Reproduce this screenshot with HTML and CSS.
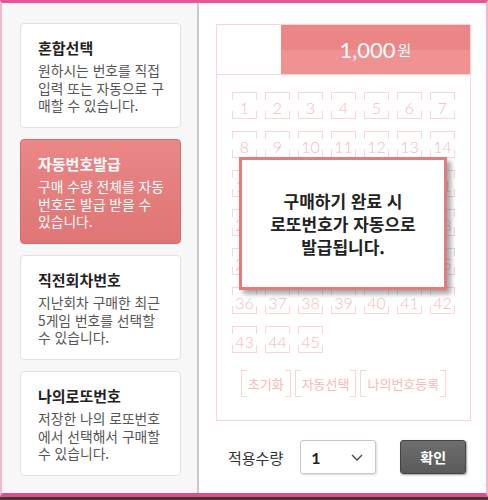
FILE: index.html
```html
<!DOCTYPE html>
<html lang="ko">
<head>
    <meta charset="UTF-8">
    <meta name="viewport" content="width=device-width, initial-scale=1.0">
    <title>로또 구매</title>
    <link rel="stylesheet" href="styles.css">
</head>
<body>
    <div class="frame">
        <div class="menu">
            <div class="card">
                <h3>혼합선택</h3>
                <p>원하시는 번호를 직접<br>입력 또는 자동으로 구<br>매할 수 있습니다.</p>
            </div>
            <div class="card active">
                <h3>자동번호발급</h3>
                <p>구매 수량 전체를 자동<br>번호로 발급 받을 수<br>있습니다.</p>
            </div>
            <div class="card">
                <h3>직전회차번호</h3>
                <p>지난회차 구매한 최근<br>5게임 번호를 선택할<br>수 있습니다.</p>
            </div>
            <div class="card">
                <h3>나의로또번호</h3>
                <p>저장한 나의 로또번호<br>에서 선택해서 구매할<br>수 있습니다.</p>
            </div>
        </div>

        <div class="main">
            <div class="ticket">
                <div class="ticket-head">
                    <div class="blank"></div>
                    <div class="price">1,000<span>원</span></div>
                </div>
                <div class="numbers">
                    <span class="num">1</span><span class="num">2</span><span class="num">3</span><span class="num">4</span><span class="num">5</span><span class="num">6</span><span class="num">7</span>
                    <span class="num">8</span><span class="num">9</span><span class="num">10</span><span class="num">11</span><span class="num">12</span><span class="num">13</span><span class="num">14</span>
                    <span class="num">15</span><span class="num">16</span><span class="num">17</span><span class="num">18</span><span class="num">19</span><span class="num">20</span><span class="num">21</span>
                    <span class="num">22</span><span class="num">23</span><span class="num">24</span><span class="num">25</span><span class="num">26</span><span class="num">27</span><span class="num">28</span>
                    <span class="num">29</span><span class="num">30</span><span class="num">31</span><span class="num">32</span><span class="num">33</span><span class="num">34</span><span class="num">35</span>
                    <span class="num">36</span><span class="num">37</span><span class="num">38</span><span class="num">39</span><span class="num">40</span><span class="num">41</span><span class="num">42</span>
                    <span class="num">43</span><span class="num">44</span><span class="num">45</span>
                </div>
                <div class="actions">
                    <span class="bracket">초기화</span>
                    <span class="bracket">자동선택</span>
                    <span class="bracket">나의번호등록</span>
                </div>
                <div class="notice">구매하기 완료 시<br>로또번호가 자동으로<br>발급됩니다.</div>
            </div>

            <div class="apply">
                <span class="apply-label">적용수량</span>
                <div class="qty">
                    <span>1</span>
                    <svg width="12" height="7" viewBox="0 0 12 7"><path d="M1 1l5 5 5-5" fill="none" stroke="#444" stroke-width="1.3"/></svg>
                </div>
                <button class="confirm">확인</button>
            </div>
        </div>
    </div>
</body>
</html>
```

FILE: styles.css
```css
body {
    margin: 0;
    background: #3a3a3a;
    font-family: "Noto Sans CJK KR", "Noto Sans", sans-serif;
}
.frame {
    display: flex;
    height: 497px;
    box-sizing: border-box;
    background: #fff;
    border-top: 3px solid #ec5393;
    border-bottom: 4px solid #e9488b;
    border-left: 2px solid #f5b6cf;
    border-right: 2px solid #f5b6cf;
}

/* left menu */
.menu {
    width: 197px;
    box-sizing: border-box;
    background: #f7f7f7;
    border-right: 2px solid #c9c9c9;
    padding: 20px 16px 0 18px;
    display: flex;
    flex-direction: column;
    gap: 11px;
}
.card {
    height: 105px;
    box-sizing: border-box;
    background: #fff;
    border: 1px solid #e2e2e2;
    border-radius: 4px;
    padding: 14px 0 0 17px;
}
.card h3 {
    margin: 0;
    font-size: 15px;
    line-height: 20px;
    color: #222;
}
.card p {
    margin: 4px 0 0;
    font-size: 13.8px;
    line-height: 17.5px;
    color: #555;
}
.card.active {
    background: linear-gradient(#ea8787, #e07575);
    border-color: #d66c6c;
}
.card.active h3,
.card.active p {
    color: #fff;
}

/* ticket */
.main {
    flex: 1;
    padding: 21px 15px 0 17px;
}
.ticket {
    position: relative;
    height: 397px;
    box-sizing: border-box;
    border: 1px solid #fdd3d3;
}
.ticket-head {
    display: flex;
    height: 50px;
    box-sizing: border-box;
    border-bottom: 1px solid #fdd3d3;
}
.blank {
    width: 64px;
}
.price {
    flex: 1;
    display: flex;
    align-items: center;
    justify-content: center;
    background: linear-gradient(#ec8585 50%, #f09292 50%);
    color: #fff;
    font-family: Lato, sans-serif;
    font-size: 22px;
}
.price span {
    font-family: "Noto Sans CJK KR", sans-serif;
    font-size: 15px;
    margin-left: 2px;
}
.numbers {
    display: grid;
    grid-template-columns: repeat(7, 25px);
    column-gap: 8px;
    row-gap: 12px;
    justify-content: center;
    padding-top: 17px;
}
.num {
    height: 27px;
    box-sizing: border-box;
    padding-top: 2px;
    line-height: 25px;
    text-align: center;
    font-family: Lato, sans-serif;
    font-size: 16px;
    font-weight: 300;
    color: #f8b8b8;
    border-top: 1px solid #fdd3d3;
    border-bottom: 1px solid #fdd3d3;
    background:
        linear-gradient(#fdd3d3, #fdd3d3) left top / 1px 7px no-repeat,
        linear-gradient(#fdd3d3, #fdd3d3) right top / 1px 7px no-repeat,
        linear-gradient(#fdd3d3, #fdd3d3) left bottom / 1px 7px no-repeat,
        linear-gradient(#fdd3d3, #fdd3d3) right bottom / 1px 7px no-repeat;
}
.actions {
    display: flex;
    justify-content: center;
    gap: 4px;
    margin-top: 17px;
}
.bracket {
    height: 27px;
    padding: 0 6px;
    line-height: 27px;
    font-size: 13px;
    color: #f8b8b8;
    border-left: 1px solid #fdd3d3;
    border-right: 1px solid #fdd3d3;
    background:
        linear-gradient(#fdd3d3, #fdd3d3) left top / 5px 1px no-repeat,
        linear-gradient(#fdd3d3, #fdd3d3) right top / 5px 1px no-repeat,
        linear-gradient(#fdd3d3, #fdd3d3) left bottom / 5px 1px no-repeat,
        linear-gradient(#fdd3d3, #fdd3d3) right bottom / 5px 1px no-repeat;
}
.notice {
    position: absolute;
    left: 22px;
    top: 132px;
    width: 208px;
    height: 133px;
    box-sizing: border-box;
    display: flex;
    align-items: center;
    justify-content: center;
    text-align: center;
    background: #fff;
    border: 3px solid #e47c7c;
    box-shadow: 4px 4px 5px rgba(0, 0, 0, 0.35);
    font-size: 17px;
    font-weight: bold;
    line-height: 23px;
    color: #222;
}

/* quantity row */
.apply {
    display: flex;
    align-items: center;
    height: 34px;
    margin-top: 19px;
    padding-left: 12px;
}
.apply-label {
    font-size: 15px;
    color: #333;
}
.qty {
    width: 76px;
    height: 34px;
    box-sizing: border-box;
    margin-left: 17px;
    padding: 0 12px 0 10px;
    display: flex;
    align-items: center;
    justify-content: space-between;
    background: #fff;
    border: 1px solid #c8c8c8;
    border-radius: 3px;
    box-shadow: 1px 1px 2px rgba(0, 0, 0, 0.15);
    font-family: Lato, sans-serif;
    font-size: 16px;
    font-weight: bold;
    color: #222;
}
.confirm {
    width: 66px;
    height: 34px;
    margin-left: 24px;
    padding: 0;
    background: linear-gradient(#6e6e6e, #5a5a5a);
    border: 1px solid #444;
    border-radius: 3px;
    box-shadow: 1px 1px 2px rgba(0, 0, 0, 0.4);
    color: #fff;
    font-family: "Noto Sans CJK KR", sans-serif;
    font-size: 14px;
    font-weight: bold;
}
```
